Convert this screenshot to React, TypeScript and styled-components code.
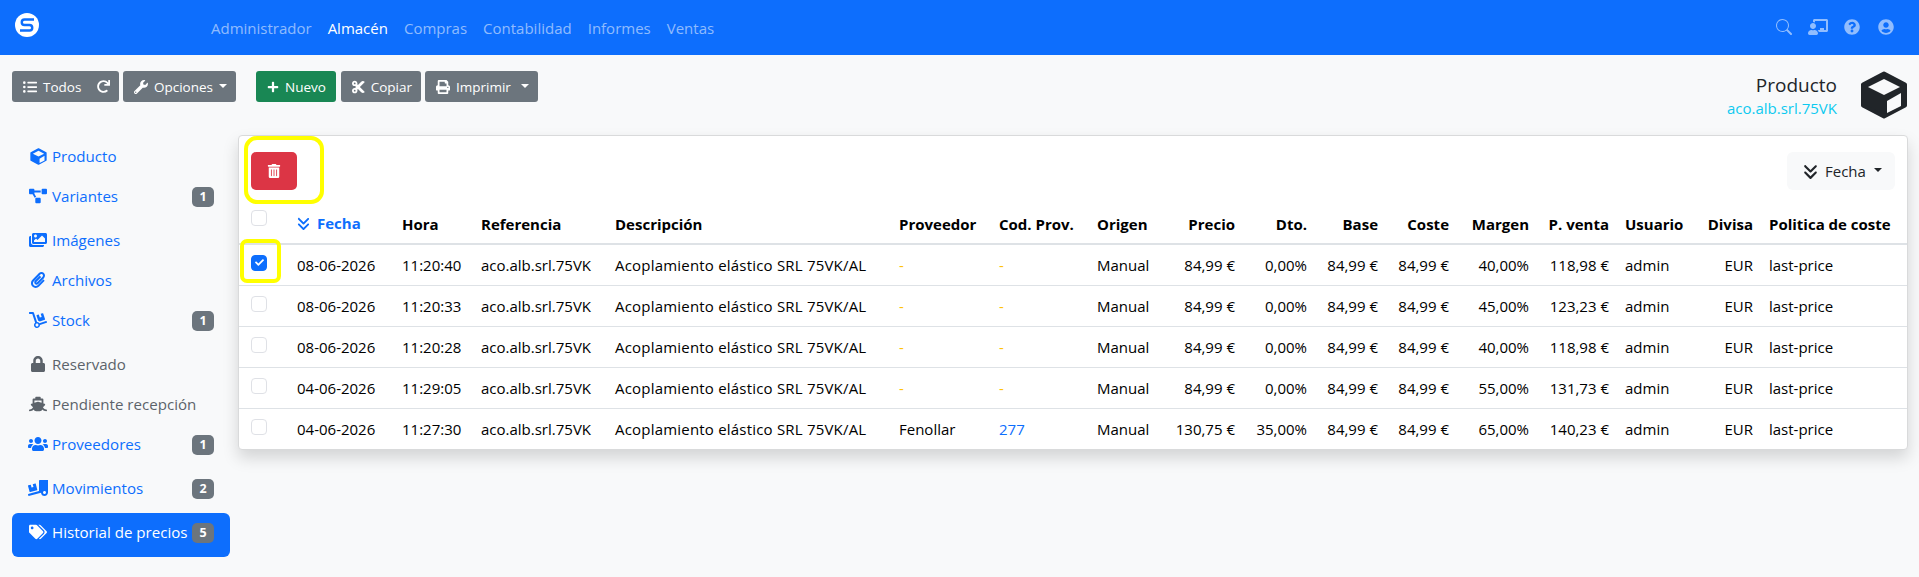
import React from 'react';
import styled, { createGlobalStyle } from 'styled-components';
import {
  FaChalkboardTeacher, FaCheck, FaCut, FaDolly, FaImages, FaListUl,
  FaLock, FaPaperclip, FaPlus, FaPrint, FaProjectDiagram, FaQuestionCircle, FaRedo, FaShip, FaTags,
  FaTrashAlt, FaTruckLoading, FaUserCircle, FaUsers, FaWrench,
} from 'react-icons/fa';
import { FaAnglesDown } from 'react-icons/fa6';
import { BsSearch } from 'react-icons/bs';

const font = `"Open Sans", "Noto Sans", "Liberation Sans", sans-serif`;

const Global = createGlobalStyle`
  html, body { margin: 0; padding: 0; background: #f8f9fa; }
  body { font-family: ${font}; font-size: 15px; color: #212529; }
  * { box-sizing: border-box; }
`;

const Page = styled.div`
  width: 1919px;
  height: 577px;
  overflow: hidden;
  background: #f8f9fa;
`;

const Navbar = styled.header`
  height: 55px;
  background: #0d6efd;
  display: flex;
  align-items: center;
  padding: 0 25px 0 15px;
`;

const Logo = styled.svg`
  width: 24px;
  height: 24px;
  margin-top: -5px;
  flex: none;
`;

const NavLinks = styled.nav`
  display: flex;
  gap: 16px;
  margin-left: 172px;
  margin-top: 1px;
`;

const NavLink = styled.span<{ $active?: boolean }>`
  font-size: 15px;
  color: ${(p) => (p.$active ? '#fff' : 'rgba(255,255,255,.55)')};
`;

const NavIcons = styled.div`
  margin-left: auto;
  display: flex;
  align-items: center;
  gap: 16px;
  color: rgba(255, 255, 255, 0.55);
  margin-top: -1px;
`;

const UserIcon = styled.span`
  display: flex;
  margin-left: 2px;
`;

const ActionBar = styled.div`
  display: flex;
  align-items: flex-start;
  padding: 16px 11px 0 12px;
  height: 82px;
`;

const Btn = styled.div<{ $color?: string; $width: number; $gapLeft?: number }>`
  width: ${(p) => p.$width}px;
  height: 31px;
  margin-left: ${(p) => p.$gapLeft ?? 4}px;
  background: ${(p) => p.$color ?? '#6c757d'};
  color: #fff;
  border-radius: 3px;
  font-size: 13.5px;
  display: flex;
  align-items: center;
  padding: 0 9px 0 11px;
  gap: 6px;
  white-space: nowrap;
  flex: none;
  &:first-child { margin-left: 0; }
`;

const Caret = styled.span<{ $color?: string }>`
  width: 0;
  height: 0;
  border-left: 4px solid transparent;
  border-right: 4px solid transparent;
  border-top: 4px solid ${(p) => p.$color ?? '#fff'};
  margin-left: auto;
  margin-top: -2px;
`;

const RightIcon = styled.span`
  margin-left: auto;
  display: flex;
`;

const TitleBlock = styled.div`
  margin-left: auto;
  display: flex;
  align-items: flex-start;
  gap: 23px;
`;

const TitleText = styled.div`
  text-align: right;
  padding-top: 2px;
`;

const Title = styled.div`
  font-size: 19px;
  line-height: 24px;
  color: #212529;
`;

const Subtitle = styled.div`
  font-size: 15px;
  line-height: 22px;
  color: #0dcaf0;
`;

const Main = styled.div`
  display: flex;
  align-items: flex-start;
  padding: 0 11px 0 12px;
`;

const Sidebar = styled.aside`
  width: 218px;
  flex: none;
`;

const SideItem = styled.div<{ $tall?: boolean; $active?: boolean; $muted?: boolean }>`
  height: ${(p) => (p.$tall ? 44 : 40)}px;
  padding: 7px 16px 8px;
  display: flex;
  align-items: flex-start;
  border-radius: 6px;
  font-size: 15.1px;
  line-height: 24px;
  white-space: nowrap;
  background: ${(p) => (p.$active ? '#0d6efd' : 'transparent')};
  color: ${(p) => (p.$active ? '#fff' : p.$muted ? '#5c636a' : '#0d6efd')};
`;

const SideIcon = styled.span`
  width: 24px;
  height: 24px;
  margin-left: -2px;
  margin-right: 2px;
  flex: none;
  display: flex;
  align-items: center;
  justify-content: center;
`;

const Badge = styled.span`
  margin-left: auto;
  margin-top: 3px;
  width: 22px;
  height: 20px;
  border-radius: 5px;
  background: #6c757d;
  color: #fff;
  font-size: 12.5px;
  font-weight: 700;
  line-height: 20px;
  text-align: center;
  flex: none;
`;

const Card = styled.section`
  margin-left: 8px;
  margin-top: -2px;
  width: 1670px;
  flex: none;
  background: #fff;
  border: 1px solid #d9dadb;
  border-radius: 4px;
  box-shadow: 0 8px 16px rgba(0, 0, 0, 0.15);
`;

const CardTop = styled.div`
  height: 66px;
  display: flex;
  align-items: flex-start;
  justify-content: space-between;
  padding: 16px 12px 0 12px;
`;

const TrashHolder = styled.div`
  position: relative;
  width: 46px;
  height: 38px;
`;

const Highlight = styled.span`
  position: absolute;
  border: 4px solid #ffff00;
  pointer-events: none;
`;

const HighlightTrash = styled(Highlight)`
  left: -7px;
  top: -16px;
  width: 80px;
  height: 68px;
  border-radius: 13px;
`;

const HighlightCheck = styled(Highlight)`
  left: 1px;
  top: -26px;
  width: 41px;
  height: 44px;
  border-radius: 7px;
`;

const TrashBtn = styled.div`
  width: 46px;
  height: 38px;
  background: #dc3545;
  color: #fff;
  border-radius: 5px;
  display: flex;
  align-items: center;
  justify-content: center;
`;

const SortBtn = styled.div`
  width: 108px;
  height: 38px;
  background: #f8f9fa;
  border-radius: 6px;
  display: flex;
  align-items: center;
  padding: 0 13px 0 15px;
  gap: 6px;
  font-size: 15px;
  color: #212529;
`;

const Table = styled.table`
  width: 1668px;
  table-layout: fixed;
  border-collapse: collapse;
  font-size: 15px;
`;

const Th = styled.th<{ $right?: boolean; $blue?: boolean }>`
  height: 42px;
  padding: 3px 8px 0;
  text-align: ${(p) => (p.$right ? 'right' : 'left')};
  font-weight: 700;
  white-space: nowrap;
  color: ${(p) => (p.$blue ? '#0d6efd' : '#000')};
  vertical-align: middle;
`;

const Td = styled.td<{ $right?: boolean; $tone?: string; $wide?: boolean }>`
  height: 41px;
  padding: 0 8px;
  text-align: ${(p) => (p.$right ? 'right' : 'left')};
  white-space: nowrap;
  color: ${(p) => p.$tone ?? '#000'};
  letter-spacing: ${(p) => (p.$wide ? '0.2px' : 'normal')};
`;

const Tr = styled.tr`
  border-bottom: 1px solid #dee2e6;
`;

const HeadRow = styled.tr`
  border-bottom: 2px solid #dee2e6;
`;

const BodyLast = styled.tr``;

const CheckCell = styled.td`
  padding: 0;
  position: relative;
`;

const CheckHead = styled.th`
  padding: 0;
  position: relative;
  vertical-align: top;
`;

const CheckWrap = styled.div`
  position: relative;
  height: 0;
`;

const CheckBox = styled.span<{ $on?: boolean; $top: number }>`
  position: absolute;
  left: 12px;
  top: ${(p) => p.$top}px;
  width: 16px;
  height: 16px;
  border-radius: 4px;
  border: 1px solid ${(p) => (p.$on ? '#0d6efd' : '#dfe1e6')};
  background: ${(p) => (p.$on ? '#0d6efd' : '#fff')};
  color: #fff;
  display: flex;
  align-items: center;
  justify-content: center;
`;

const SortIcon = styled.span`
  display: inline-block;
  vertical-align: -2px;
  margin: 0 6px 0 -1px;
`;

const BlockIcon = styled.span`
  display: flex;
`;

const widths = [50, 105, 79, 134, 284, 100, 98, 69, 85, 72, 71, 71, 80, 80, 81, 63, 146];

const headers: [string, boolean][] = [
  ['Hora', false], ['Referencia', false], ['Descripción', false], ['Proveedor', false], ['Cod. Prov.', false],
  ['Origen', false], ['Precio', true], ['Dto.', true], ['Base', true], ['Coste', true], ['Margen', true],
  ['P. venta', true], ['Usuario', false], ['Divisa', true], ['Politica de coste', false],
];

const rows = [
  { d: '08-06-2026', h: '11:20:40', prov: '-', cod: '-', precio: '84,99 €', dto: '0,00%', m: '40,00%', pv: '118,98 €', on: true },
  { d: '08-06-2026', h: '11:20:33', prov: '-', cod: '-', precio: '84,99 €', dto: '0,00%', m: '45,00%', pv: '123,23 €' },
  { d: '08-06-2026', h: '11:20:28', prov: '-', cod: '-', precio: '84,99 €', dto: '0,00%', m: '40,00%', pv: '118,98 €' },
  { d: '04-06-2026', h: '11:29:05', prov: '-', cod: '-', precio: '84,99 €', dto: '0,00%', m: '55,00%', pv: '131,73 €' },
  { d: '04-06-2026', h: '11:27:30', prov: 'Fenollar', cod: '277', precio: '130,75 €', dto: '35,00%', m: '65,00%', pv: '140,23 €' },
];

function BoxIcon({ size, dark, light }: { size: number; dark: string; light: string }) {
  return (
    <svg width={size} height={size} viewBox="0 0 48 48" aria-hidden="true">
      <path
        d="M24 2.500 45 13.500V34.500L24 45.500 3 34.500V13.500Z"
        fill={dark}
        stroke={dark}
        strokeWidth="4"
        strokeLinejoin="round"
      />
      <path d="M24 8 40 16 24 24 8 16Z" fill={light} />
      <path d="M27 30 41 22V35L27 42Z" fill={light} />
    </svg>
  );
}

const side = [
  { t: 'Producto', i: <BoxIcon size={17} dark="#0d6efd" light="#f8f9fa" /> },
  { t: 'Variantes', i: <FaProjectDiagram size={18} />, b: '1' },
  { t: 'Imágenes', i: <FaImages size={18} /> },
  { t: 'Archivos', i: <FaPaperclip size={16} /> },
  { t: 'Stock', i: <FaDolly size={18} />, b: '1' },
  { t: 'Reservado', i: <FaLock size={16} />, muted: true },
  { t: 'Pendiente recepción', i: <FaShip size={18} />, muted: true },
  { t: 'Proveedores', i: <FaUsers size={20} />, b: '1' },
  { t: 'Movimientos', i: <FaTruckLoading size={20} />, b: '2' },
  { t: 'Historial de precios', i: <FaTags size={18} />, b: '5', active: true },
];

export default function App() {
  return (
    <Page>
      <Global />
      <Navbar>
        <Logo viewBox="0 0 24 24" aria-hidden="true">
          <circle cx="12" cy="12" r="12" fill="#fff" />
          <path d="M19 6.500H9.500a2.750 2.750 0 0 0 0 5.500h5a2.750 2.750 0 0 1 0 5.500H5" fill="none" stroke="#0d6efd" strokeWidth="2.400" />
        </Logo>
        <NavLinks>
          <NavLink>Administrador</NavLink>
          <NavLink $active>Almacén</NavLink>
          <NavLink>Compras</NavLink>
          <NavLink>Contabilidad</NavLink>
          <NavLink>Informes</NavLink>
          <NavLink>Ventas</NavLink>
        </NavLinks>
        <NavIcons>
          <BsSearch size={16} />
          <FaChalkboardTeacher size={20} />
          <FaQuestionCircle size={16} />
          <UserIcon><FaUserCircle size={16} /></UserIcon>
        </NavIcons>
      </Navbar>
      <ActionBar>
        <Btn $width={107}><FaListUl size={14} />Todos<RightIcon><FaRedo size={13} /></RightIcon></Btn>
        <Btn $width={113}><FaWrench size={14} />Opciones<Caret /></Btn>
        <Btn $width={80} $gapLeft={20} $color="#198754"><FaPlus size={12} />Nuevo</Btn>
        <Btn $width={80} $gapLeft={5}><FaCut size={16} />Copiar</Btn>
        <Btn $width={113}><FaPrint size={14} />Imprimir<Caret /></Btn>
        <TitleBlock>
          <TitleText>
            <Title>Producto</Title>
            <Subtitle>aco.alb.srl.75VK</Subtitle>
          </TitleText>
          <BoxIcon size={48} dark="#212529" light="#f8f9fa" />
        </TitleBlock>
      </ActionBar>
      <Main>
        <Sidebar>
          {side.map((s) => (
            <SideItem key={s.t} $tall={!!s.b} $active={s.active} $muted={s.muted}>
              <SideIcon>{s.i}</SideIcon>
              {s.t}
              {s.b && <Badge>{s.b}</Badge>}
            </SideItem>
          ))}
        </Sidebar>
        <Card>
          <CardTop>
            <TrashHolder>
              <HighlightTrash />
              <TrashBtn><FaTrashAlt size={14} /></TrashBtn>
            </TrashHolder>
            <SortBtn><BlockIcon><FaAnglesDown size={17} /></BlockIcon>Fecha<Caret $color="#212529" /></SortBtn>
          </CardTop>
          <Table>
            <colgroup>
              {widths.map((w, i) => <col key={i} style={{ width: w }} />)}
            </colgroup>
            <thead>
              <HeadRow>
                <CheckHead><CheckWrap><CheckBox $top={8} /></CheckWrap></CheckHead>
                <Th $blue><SortIcon><FaAnglesDown size={15} /></SortIcon>Fecha</Th>
                {headers.map(([t, r]) => <Th key={t} $right={r}>{t}</Th>)}
              </HeadRow>
            </thead>
            <tbody>
              {rows.map((r, i) => {
                const Row = i === rows.length - 1 ? BodyLast : Tr;
                return (
                  <Row key={i}>
                    <CheckCell>
                      <CheckWrap>
                        <CheckBox $top={-10} $on={r.on}>{r.on && <FaCheck size={9} />}</CheckBox>
                        {r.on && <HighlightCheck />}
                      </CheckWrap>
                    </CheckCell>
                    <Td>{r.d}</Td>
                    <Td>{r.h}</Td>
                    <Td>aco.alb.srl.75VK</Td>
                    <Td $wide>Acoplamiento elástico SRL 75VK/AL</Td>
                    <Td $tone={r.prov === '-' ? '#ffc107' : undefined}>{r.prov}</Td>
                    <Td $tone={r.cod === '-' ? '#ffc107' : '#0d6efd'}>{r.cod}</Td>
                    <Td>Manual</Td>
                    <Td $right>{r.precio}</Td>
                    <Td $right>{r.dto}</Td>
                    <Td $right>84,99 €</Td>
                    <Td $right>84,99 €</Td>
                    <Td $right>{r.m}</Td>
                    <Td $right>{r.pv}</Td>
                    <Td>admin</Td>
                    <Td $right>EUR</Td>
                    <Td>last-price</Td>
                  </Row>
                );
              })}
            </tbody>
          </Table>
        </Card>
      </Main>
    </Page>
  );
}
